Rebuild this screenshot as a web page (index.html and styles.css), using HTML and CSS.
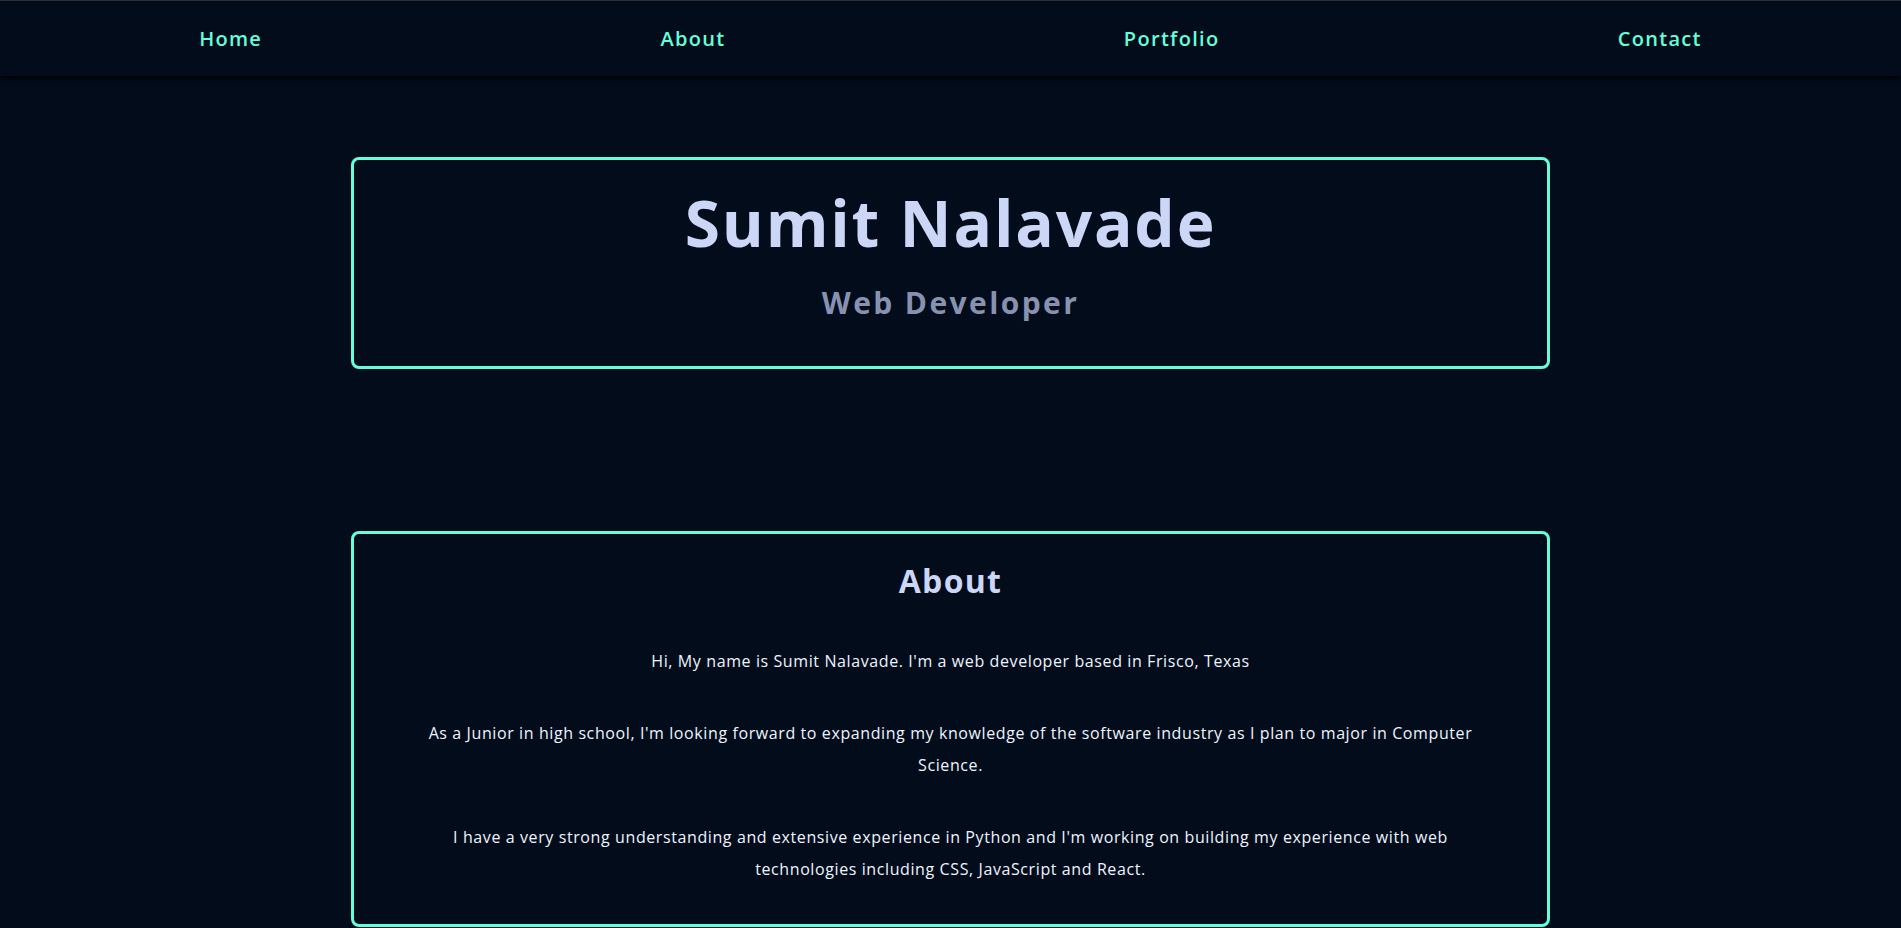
FILE: index.html
```html
<!DOCTYPE html>
<html lang="en">
<head>
<meta charset="utf-8">
<title>Sumit Nalavade</title>
<link rel="stylesheet" href="styles.css">
</head>
<body>
<nav class="nav">
  <a class="nav-link" href="#home">Home</a>
  <a class="nav-link" href="#about">About</a>
  <a class="nav-link" href="#portfolio">Portfolio</a>
  <a class="nav-link" href="#contact">Contact</a>
</nav>
<main class="main">
  <section class="card hero" id="home">
    <h1 class="hero-name">Sumit Nalavade</h1>
    <h2 class="hero-role">Web Developer</h2>
  </section>
  <section class="card about" id="about">
    <h2 class="about-title">About</h2>
    <p class="about-text">Hi, My name is Sumit Nalavade. I'm a web developer based in Frisco, Texas</p>
    <p class="about-text">As a Junior in high school, I'm looking forward to expanding my knowledge of the software industry as I plan to major in Computer Science.</p>
    <p class="about-text">I have a very strong understanding and extensive experience in Python and I'm working on building my experience with web technologies including CSS, JavaScript and React.</p>
  </section>
</main>
</body>
</html>
```
FILE: styles.css
```css
* {
  box-sizing: border-box;
}

html, body {
  margin: 0;
  padding: 0;
}

body {
  background: #020c1b;
  font-family: "Open Sans", "Liberation Sans", sans-serif;
  min-height: 100vh;
}

.nav {
  position: relative;
  z-index: 2;
  height: 76px;
  border-top: 1px solid #2e2e33;
  background: #020c1b;
  display: flex;
  justify-content: space-around;
  align-items: center;
  box-shadow: 0 3px 5px rgba(0, 0, 0, 0.85);
}

.nav-link {
  color: #64ffda;
  font-size: 20px;
  font-weight: 600;
  letter-spacing: 1.3px;
  text-decoration: none;
  line-height: 24px;
}

.main {
  display: flex;
  flex-direction: column;
  align-items: center;
  padding-top: 81px;
  gap: 162px;
}

.card {
  width: 1199px;
  border: 3px solid #64ffda;
  border-radius: 8px;
  text-align: center;
}

.hero {
  height: 212px;
  padding-top: 24px;
}

.hero-name {
  margin: 0;
  font-size: 64px;
  line-height: 78px;
  font-weight: 700;
  letter-spacing: 1.8px;
  color: #ccd6f6;
}

.hero-role {
  margin: 21px 0 0;
  font-size: 30px;
  line-height: 40px;
  font-weight: 700;
  letter-spacing: 2.4px;
  color: #8892b0;
}

.about {
  padding: 27px 60px 39px;
}

.about-title {
  margin: 0 0 45px;
  font-size: 32px;
  line-height: 39px;
  font-weight: 700;
  letter-spacing: 1.3px;
  color: #ccd6f6;
}

.about-text {
  margin: 0;
  font-size: 16px;
  line-height: 32px;
  letter-spacing: 0.6px;
  color: #eef4ff;
}

.about-text + .about-text {
  margin-top: 40px;
}
```
